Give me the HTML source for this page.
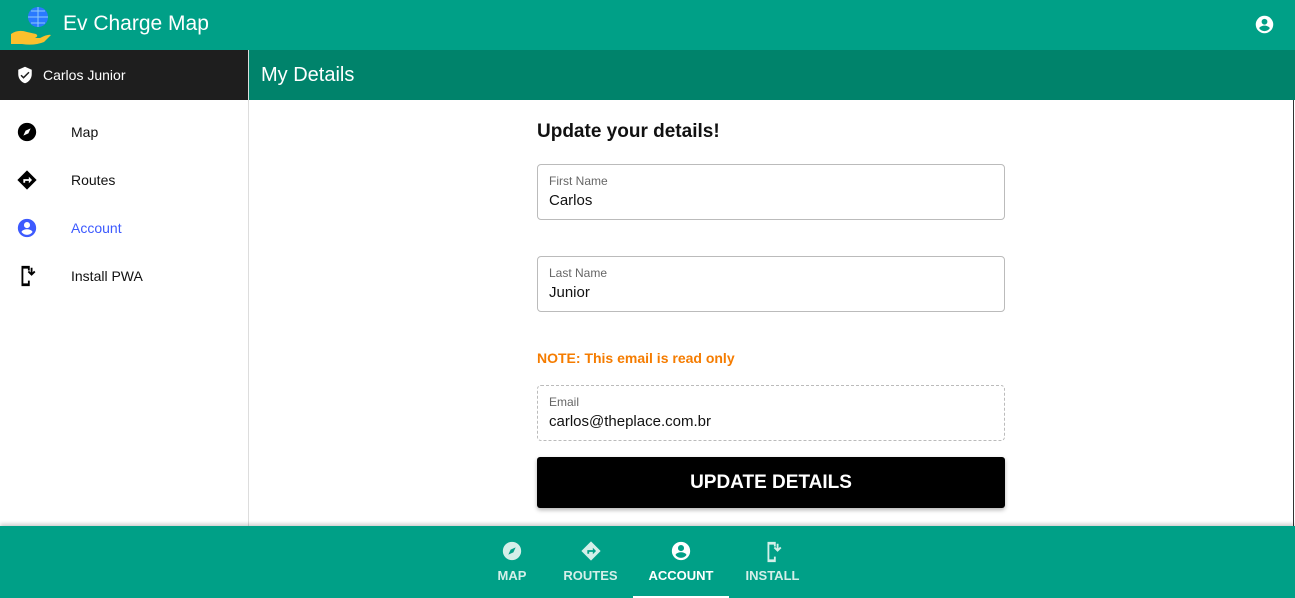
<!DOCTYPE html>
<html><head><meta charset="utf-8"><style>
*{box-sizing:border-box;margin:0;padding:0}
body{width:1295px;height:598px;overflow:hidden;font-family:"Liberation Sans",sans-serif;background:#fff;position:relative}
.top{position:absolute;left:0;top:0;width:1295px;height:50px;background:#00a087;color:#fff}
.top .title{position:absolute;left:63px;top:12px;font-size:21px}
.side{position:absolute;left:0;top:50px;width:249px;height:476px;border-right:1px solid #ddd;background:#fff}
.user{height:50px;background:#1e1e1e;color:#fff;font-size:14px;display:flex;align-items:center;padding-left:16px}
.user span{margin-left:9px}
.item{height:48px;display:flex;align-items:center;font-size:14px;color:#111;position:relative}
.item svg{position:absolute;left:16px}
.item span{position:absolute;left:71px}
.sub{position:absolute;left:249px;top:50px;width:1046px;height:50px;background:#00836b;color:#fff;font-size:20px;padding:14px 0 0 12px}
h2{position:absolute;left:537px;top:121px;font-size:19px;font-weight:bold;color:#111}
.fld{position:absolute;left:537px;width:468px;height:56px;border:1px solid #bbb;border-radius:4px;padding:9px 0 0 11px}
.fld .l{font-size:12px;color:#666}
.fld .v{font-size:15px;color:#111;margin-top:4px}
.note{position:absolute;left:537px;top:350px;font-size:14px;font-weight:bold;color:#f57c00}
.btn{position:absolute;left:537px;top:457px;width:468px;height:51px;background:#000;color:#fff;font-size:19px;font-weight:bold;text-align:center;line-height:52px;border-radius:3px;box-shadow:0 2px 4px rgba(0,0,0,.3)}
.bot{position:absolute;left:0;top:526px;width:1295px;height:72px;background:#00a087;box-shadow:0 -2px 4px rgba(0,0,0,.2)}
.tab{position:absolute;top:0;height:72px;text-align:center;color:#d4efe9;font-size:13px;font-weight:bold}
.tab svg{position:absolute;top:14px;left:50%;margin-left:-11px}
.tab span{position:absolute;top:42px;left:0;right:0}
.edge{position:absolute;left:1293px;top:100px;width:1px;height:426px;background:#333}
</style></head><body>
<div class="top">
<svg style="position:absolute;left:10px;top:4px" width="42" height="42" viewBox="0 0 42 42"><path d="M1 30 Q8 25 17 28 L26 30 Q29 32 25 34 L20 34 L30 34 Q38 30 41 31 L34 38 Q24 42 12 40 L1 40Z" fill="#fbc02d"/><circle cx="28" cy="13" r="10" fill="#2979ff"/><path d="M18 13h20M28 3v20M21 7h14M21 19h14" stroke="#90caf9" stroke-width="1" fill="none"/></svg>
<div class="title">Ev Charge Map</div>
<svg style="position:absolute;left:1254px;top:14px" width="21" height="21" viewBox="0 0 24 24"><path fill="#fff" d="M12 2a10 10 0 100 20 10 10 0 000-20zm0 3.5a3.3 3.3 0 110 6.6 3.3 3.3 0 010-6.6zm0 14a7.5 7.5 0 01-6-3.1c.1-2 4-3.1 6-3.1s5.9 1.1 6 3.1a7.5 7.5 0 01-6 3.1z"/></svg>
</div>
<div class="side">
<div class="user"><svg width="18" height="20" viewBox="0 0 24 24"><path fill="#fff" d="M12 1L3 5v6c0 5.5 3.8 10.7 9 12 5.2-1.3 9-6.5 9-12V5l-9-4zm-2 16l-4-4 1.4-1.4L10 14.2l6.6-6.6L18 9l-8 8z"/></svg><span>Carlos Junior</span></div>
<div class="item" style="margin-top:8px"><svg width="22" height="22" viewBox="0 0 24 24"><circle cx="12" cy="12" r="10" fill="#000"/><path d="M16 8l-2.5 5.5L8 16l2.5-5.5z" fill="#fff"/></svg><span>Map</span></div>
<div class="item"><svg width="22" height="22" viewBox="0 0 24 24"><path d="M12 1.5L22.5 12 12 22.5 1.5 12z" fill="#000"/><path d="M8 15v-4h6V8.5l3.5 3.5-3.5 3.5V13H10v2z" fill="#fff"/></svg><span>Routes</span></div>
<div class="item"><svg width="22" height="22" viewBox="0 0 24 24"><path fill="#3d5afe" d="M12 2a10 10 0 100 20 10 10 0 000-20zm0 3.5a3.3 3.3 0 110 6.6 3.3 3.3 0 010-6.6zm0 14a7.5 7.5 0 01-6-3.1c.1-2 4-3.1 6-3.1s5.9 1.1 6 3.1a7.5 7.5 0 01-6 3.1z"/></svg><span style="color:#3d5afe">Account</span></div>
<div class="item"><svg width="22" height="24" viewBox="0 0 24 24"><path d="M6 1h9v5h-2V4H8v16h5v-3h2v6H6z" fill="#000"/><path d="M17 3v7M13.5 7l3.5 3.5L20.5 7" stroke="#000" stroke-width="2" fill="none"/></svg><span>Install PWA</span></div>
</div>
<div class="sub">My Details</div>
<div class="edge"></div>
<h2>Update your details!</h2>
<div class="fld" style="top:164px"><div class="l">First Name</div><div class="v">Carlos</div></div>
<div class="fld" style="top:256px"><div class="l">Last Name</div><div class="v">Junior</div></div>
<div class="note">NOTE: This email is read only</div>
<div class="fld" style="top:385px;border:1px dashed #bbb"><div class="l">Email</div><div class="v">carlos@theplace.com.br</div></div>
<div class="btn">UPDATE DETAILS</div>
<div class="bot">
<div class="tab" style="left:482px;width:60px"><svg width="22" height="22" viewBox="0 0 24 24"><circle cx="12" cy="12" r="10" fill="#d4efe9"/><path d="M16 8l-2.5 5.5L8 16l2.5-5.5z" fill="#00a087"/></svg><span>MAP</span></div>
<div class="tab" style="left:553px;width:75px"><svg width="22" height="22" viewBox="0 0 24 24"><path d="M12 1.5L22.5 12 12 22.5 1.5 12z" fill="#d4efe9"/><path d="M8 15v-4h6V8.5l3.5 3.5-3.5 3.5V13H10v2z" fill="#00a087"/></svg><span>ROUTES</span></div>
<div class="tab" style="left:633px;width:96px;color:#fff;border-bottom:2px solid #fff"><svg width="22" height="22" viewBox="0 0 24 24"><path fill="#fff" d="M12 2a10 10 0 100 20 10 10 0 000-20zm0 3.5a3.3 3.3 0 110 6.6 3.3 3.3 0 010-6.6zm0 14a7.5 7.5 0 01-6-3.1c.1-2 4-3.1 6-3.1s5.9 1.1 6 3.1a7.5 7.5 0 01-6 3.1z"/></svg><span>ACCOUNT</span></div>
<div class="tab" style="left:735px;width:75px"><svg width="22" height="24" viewBox="0 0 24 24"><path d="M6 1h9v5h-2V4H8v16h5v-3h2v6H6z" fill="#d4efe9"/><path d="M17 3v7M13.5 7l3.5 3.5L20.5 7" stroke="#d4efe9" stroke-width="2" fill="none"/></svg><span>INSTALL</span></div>
</div>
</body></html>
